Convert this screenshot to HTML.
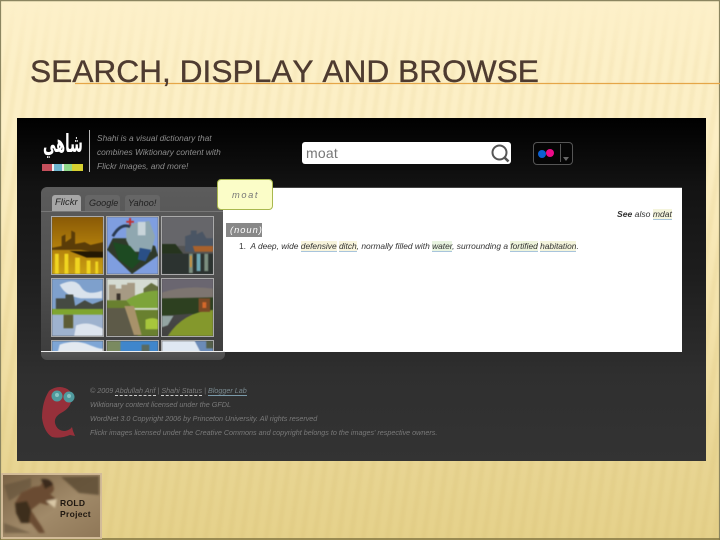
<!DOCTYPE html>
<html><head><meta charset="utf-8"><style>
html,body{margin:0;padding:0;width:720px;height:540px;overflow:hidden}
body{position:relative;background:#fdf0c8;font-family:"Liberation Sans",sans-serif}
#w{position:absolute;left:0;top:0;width:720px;height:540px;filter:blur(.3px)}
.a{position:absolute}
.t{position:absolute;white-space:nowrap;font-style:italic}
.th{position:absolute;overflow:hidden;box-sizing:border-box;border:1px solid #aaa}
.th svg{display:block;width:100%;height:100%;filter:blur(.6px)}
</style></head><body><div id="w">
<svg class="a" style="left:0;top:0" width="720" height="540" viewBox="0 0 720 540">
<defs>
<linearGradient id="bg" x1="0" y1="0" x2="0" y2="1"><stop offset="0" stop-color="#fdf0c9"/><stop offset=".25" stop-color="#fcefc5"/><stop offset=".6" stop-color="#f3e2aa"/><stop offset=".85" stop-color="#e8d593"/><stop offset="1" stop-color="#e5d18a"/></linearGradient>
<pattern id="st" width="12" height="22" patternUnits="userSpaceOnUse" patternTransform="rotate(8)"><rect width="5" height="22" fill="#d8bf76"/></pattern>
<linearGradient id="fadeB" x1="0" y1="0" x2="0" y2="1"><stop offset="0" stop-color="#000"/><stop offset=".12" stop-color="#555"/><stop offset="1" stop-color="#aaa"/></linearGradient>
<mask id="mL" maskUnits="userSpaceOnUse" x="0" y="0" width="720" height="540"><rect width="720" height="540" fill="url(#fadeB)"/></mask>
<filter id="bl"><feGaussianBlur stdDeviation="1.1"/></filter>
</defs>
<rect width="720" height="540" fill="url(#bg)"/>
<g mask="url(#mL)" opacity=".32"><rect x="-20" y="-20" width="760" height="580" fill="url(#st)" filter="url(#bl)"/></g>
<path d="M0 .5H720" stroke="#8b8560" stroke-width="1.4"/>
<path d="M.5 0V540M719.5 0V540" stroke="#8b8560" stroke-width="1.2"/>
<path d="M0 539H720" stroke="#7f7340" stroke-width="1.6"/>
<path d="M75 83.5H720" stroke="#e5a648" stroke-width="1.2"/>
</svg>
<div class="a" style="left:30px;top:51px;font-size:31.7px;line-height:40px;color:#4e3b30;white-space:nowrap;font-kerning:none;-webkit-text-stroke:.35px #4e3b30">SEARCH, DISPLAY AND BROWSE</div>

<div class="a" style="left:17px;top:118px;width:689px;height:343px;background:linear-gradient(#000 0,#131313 20%,#1d1d1d 45%,#2f2f2f 75%,#333 100%)"></div>

<!-- logo -->
<div class="t" style="left:43px;top:128px;font:bold 25px/32px 'DejaVu Sans',sans-serif;color:#fff;transform:scaleX(.52);transform-origin:0 0">شاهي</div>
<div class="a" style="left:42px;top:164px;width:10px;height:7px;background:#c44f5b"></div>
<div class="a" style="left:52px;top:164px;width:2px;height:7px;background:#eee"></div>
<div class="a" style="left:54px;top:164px;width:8px;height:7px;background:#6db5cf"></div>
<div class="a" style="left:62px;top:164px;width:2px;height:7px;background:#eee"></div>
<div class="a" style="left:64px;top:164px;width:8px;height:7px;background:#8fd88a"></div>
<div class="a" style="left:72px;top:164px;width:11px;height:7px;background:#d6d030"></div>
<div class="a" style="left:89px;top:130px;width:1px;height:42px;background:#bbb"></div>
<div class="t" style="left:97px;top:131px;font-size:8.35px;line-height:14px;color:#8d8d8d">Shahi is a visual dictionary that<br>combines Wiktionary content with<br>Flickr images, and more!</div>

<!-- search -->
<div class="a" style="left:302px;top:142px;width:209px;height:22px;background:#fff;border-radius:3px"></div>
<div class="a" style="left:306px;top:145px;font-size:14px;line-height:17px;color:#777;letter-spacing:.2px">moat</div>
<svg class="a" style="left:488px;top:142px" width="24" height="22"><circle cx="11.5" cy="10.5" r="7" fill="none" stroke="#555" stroke-width="2"/><path d="M16.5 15.5L20.5 19.5" stroke="#555" stroke-width="2.6"/></svg>

<!-- flickr -->
<div class="a" style="left:533px;top:142px;width:38px;height:21px;border:1px solid #555;border-radius:4px;background:#050505"></div>
<div class="a" style="left:538px;top:150px;width:8px;height:8px;border-radius:50%;background:#0b5fd0"></div>
<div class="a" style="left:546px;top:149px;width:8px;height:8px;border-radius:50%;background:#ed0a88"></div>
<div class="a" style="left:560px;top:144px;width:1px;height:18px;background:#555"></div>
<div class="a" style="left:563px;top:157px;width:0;height:0;border-left:3.5px solid transparent;border-right:3.5px solid transparent;border-top:4px solid #666"></div>

<!-- left panel -->
<div class="a" style="left:41px;top:187px;width:184px;height:173px;border-radius:6px;background:linear-gradient(#5c5c5c 0,#505050 50%,#3e3e3e 95%,#555 95%,#4a4a4a 100%)"></div>
<div class="a" style="left:41px;top:211px;width:182px;height:1px;background:#777"></div>
<div class="a" style="left:52px;top:195px;width:29px;height:16px;background:#a6a6a6;border-radius:3px 3px 0 0"></div>
<div class="a" style="left:85px;top:195px;width:35px;height:16px;background:#666;border-radius:3px 3px 0 0"></div>
<div class="a" style="left:125px;top:195px;width:35px;height:16px;background:#666;border-radius:3px 3px 0 0"></div>
<div class="t" style="left:55px;top:197px;font-size:9.5px;line-height:12px;color:#222">Flickr</div>
<div class="t" style="left:89px;top:197px;font-size:9.1px;line-height:12px;color:#222">Google</div>
<div class="t" style="left:128px;top:197px;font-size:9.2px;line-height:12px;color:#222">Yahoo!</div>

<!-- white content -->
<div class="a" style="left:223px;top:187px;width:459px;height:165px;background:#fff;border-top:1px solid #444;box-sizing:border-box"></div>

<!-- thumbs -->
<div class="th" style="left:51px;top:216px;width:53px;height:59px"><svg viewBox="0 0 53 59" preserveAspectRatio="none"><defs><linearGradient id="g1" x1="0" y1="0" x2="0" y2="1"><stop offset="0" stop-color="#8a5a06"/><stop offset=".5" stop-color="#b07d0c"/><stop offset="1" stop-color="#c9a012"/></linearGradient></defs><rect width="53" height="59" fill="url(#g1)"/><path d="M0 32L10 30V20L14 18V26L20 22V14L24 16V28L34 26L40 29L53 26V38L30 34H0Z" fill="#5a3c08"/><path d="M18 35L53 36V42L36 42Z" fill="#241803"/><path d="M3 38h4v21h-4zM13 38h4v21h-4zM24 42h5v17h-5zM36 45h4v14h-4zM45 46h3v13h-3z" fill="#f0d520"/></svg></div>
<div class="th" style="left:106px;top:216px;width:53px;height:59px"><svg viewBox="0 0 53 59" preserveAspectRatio="none"><rect width="53" height="59" fill="#7f9ee0"/><path d="M0 34L26 59L53 40L50 30L26 22L6 22Z" fill="#2f3a2a"/><path d="M20 8L44 4L50 20L46 36L26 36L20 24Z" fill="#8fa7b0"/><path d="M32 5h8v14h-8z" fill="#c8d4da"/><path d="M6 26L24 30L36 44L26 54L12 44Z" fill="#1d4a22"/><path d="M34 32L46 34L40 46L32 44Z" fill="#2a4f86"/><path d="M20 4h8v2h-8zM23 1h2v8h-2z" fill="#c03030"/><path d="M6 20Q14 6 24 10" stroke="#2a3a50" stroke-width="3" fill="none"/></svg></div>
<div class="th" style="left:161px;top:216px;width:53px;height:59px"><svg viewBox="0 0 53 59" preserveAspectRatio="none"><rect width="53" height="30" fill="#66666a"/><path d="M24 30V20L30 18V14L36 14V18L42 15L46 22L53 22V36H24Z" fill="#4a5564"/><path d="M0 28L14 28L22 38H0Z" fill="#26341e"/><path d="M32 30L53 30V36H34Z" fill="#a8612c"/><rect y="38" width="53" height="21" fill="#2c3330"/><path d="M28 38h4v20h-4zM44 38h4v18h-4z" fill="#7c8f80"/><path d="M36 38h4v18h-4z" fill="#6fa9b5"/><path d="M29 40h2v12h-2z" fill="#c9913e"/></svg></div>
<div class="th" style="left:51px;top:278px;width:53px;height:59px"><svg viewBox="0 0 53 59" preserveAspectRatio="none"><rect width="53" height="59" fill="#7ea0cc"/><path d="M8 6Q24 -2 30 8T52 12V20H30Q14 18 8 6Z" fill="#d9e2ec"/><path d="M4 20h10V16h8l2 12 10-6 8 4 11-4v14H4Z" fill="#454a42"/><rect y="31" width="53" height="6" fill="#7fa52f"/><rect y="37" width="53" height="22" fill="#9eb2ce"/><path d="M12 37h10v14h-10z" fill="#5d5c34"/><path d="M25 48q10-4 20 0t8 4v7h-30Z" fill="#dde4ee"/></svg></div>
<div class="th" style="left:106px;top:278px;width:53px;height:59px"><svg viewBox="0 0 53 59" preserveAspectRatio="none"><rect width="53" height="59" fill="#d5dbd2"/><path d="M2 6h7v4h6V6h6V4h8v18L2 22Z" fill="#a69a84"/><path d="M10 15h4v7h-4z" fill="#39312a"/><path d="M38 10l8-6 7 4v14H38Z" fill="#66703f"/><path d="M20 22Q36 12 53 12V30H26Z" fill="#7da43a"/><path d="M0 22h20l8 10 25 0v27H0Z" fill="#69802f"/><path d="M0 30h24l8 29H0Z" fill="#5d5a48"/><path d="M18 28L28 28L36 58L28 58Z" fill="#a8926a"/><path d="M40 42q8-3 13 0v10h-13Z" fill="#a7c63c"/></svg></div>
<div class="th" style="left:161px;top:278px;width:53px;height:59px"><svg viewBox="0 0 53 59" preserveAspectRatio="none"><rect width="53" height="22" fill="#7d7570"/><path d="M0 0h53v10Q26 6 0 14Z" fill="#6a6670"/><path d="M0 20L53 19V40L30 36L0 38Z" fill="#2d4020"/><path d="M0 38H12L6 48L0 50Z" fill="#93a4a2"/><path d="M6 59Q22 34 53 32V59Z" fill="#84982c"/><path d="M38 20h12v14h-12z" fill="#7a4a26"/><rect x="42" y="24" width="4" height="6" fill="#d6682a"/></svg></div>
<div class="th" style="left:51px;top:340px;width:53px;height:12px;border-bottom:0"><svg viewBox="0 0 53 12" preserveAspectRatio="none"><rect width="53" height="12" fill="#7ea6d6"/><path d="M8 4q16-6 30 0t15 4v4H6Z" fill="#e3e9f0"/></svg></div>
<div class="th" style="left:106px;top:340px;width:53px;height:12px;border-bottom:0"><svg viewBox="0 0 53 12" preserveAspectRatio="none"><rect width="53" height="12" fill="#3f86cc"/><path d="M0 0h14v12H0Z" fill="#7a8a60"/><path d="M36 4h8v8h-8z" fill="#5a6a60"/></svg></div>
<div class="th" style="left:161px;top:340px;width:53px;height:12px;border-bottom:0"><svg viewBox="0 0 53 12" preserveAspectRatio="none"><rect width="53" height="12" fill="#dfe8f2"/><path d="M34 0h19v12H40Z" fill="#6b8bb8"/><path d="M46 0h7v8h-7z" fill="#55604a"/></svg></div>
<div class="a" style="left:41px;top:351px;width:184px;height:1px;background:#eee"></div>

<!-- word tab -->
<div class="a" style="left:217px;top:179px;width:56px;height:31px;box-sizing:border-box;background:#fbfdc8;border:1px solid #a9b84e;border-radius:4px"></div>
<div class="t" style="left:232px;top:189px;font-size:9.3px;line-height:12px;color:#777;letter-spacing:1.6px">moat</div>

<!-- definition -->
<div class="a" style="left:226px;top:223px;width:36px;height:14px;background:#888"></div>
<div class="t" style="left:230px;top:224px;font-size:9.3px;line-height:12px;color:#fff;letter-spacing:1px">(noun)</div>
<div class="t" style="left:239px;top:240px;font-size:8.4px;line-height:12px;color:#333"><span style="font-style:normal">1.</span>&nbsp; A deep, wide <span style="background:#f8f4dc;border-bottom:1px solid #a8c4dc">defensive</span> <span style="background:#f8f4dc;border-bottom:1px solid #a8c4dc">ditch</span>, normally filled with <span style="background:#e8f4e0;border-bottom:1px solid #a8c4dc">water</span>, surrounding a <span style="background:#eef4dc;border-bottom:1px solid #a8c4dc">fortified</span> <span style="background:#f4f4dc;border-bottom:1px solid #a8c4dc">habitation</span>.</div>
<div class="t" style="left:617px;top:208px;font-size:8.6px;line-height:12px;color:#333"><b>See</b> also <span style="background:#f4f4dc;border-bottom:1px solid #a8c4dc">mdat</span></div>

<!-- mascot -->
<svg class="a" style="left:0;top:370px" width="90" height="80" viewBox="0 370 90 80">
<path d="M60 387Q72 388 72 398Q71 408 61 413Q54 417 55 423Q57 431 65 431Q70 430 72 427L73 431L75 436L70 435Q60 439 52 437Q44 432 42 418Q42 402 49 391Q54 387 60 387Z" fill="#96303a"/>
<circle cx="57" cy="396" r="5.5" fill="#4f9a9e"/><circle cx="69" cy="397" r="5.5" fill="#4f9a9e"/><circle cx="57" cy="395" r="2" fill="#8ac4c4"/><circle cx="69" cy="396" r="2" fill="#8ac4c4"/>
</svg>

<!-- footer -->
<div class="t" style="left:90px;top:384px;font-size:7.2px;line-height:14px;color:#7a7a7a">© 2009 <span style="border-bottom:1px dashed #ccc">Abdullah Arif</span> | <span style="border-bottom:1px dashed #ccc">Shahi Status</span> | <span style="border-bottom:1px solid #7a9aaa;color:#7a8a90">Blogger Lab</span><br>Wiktionary content licensed under the GFDL<br>WordNet 3.0 Copyright 2006 by Princeton University. All rights reserved<br>Flickr images licensed under the Creative Commons and copyright belongs to the images' respective owners.</div>

<!-- ROLD image -->
<svg class="a" style="left:1px;top:473px" width="101" height="66" viewBox="0 0 101 66">
<defs><linearGradient id="r1" x1="0" y1="0" x2="1" y2="1"><stop offset="0" stop-color="#7a6346"/><stop offset=".55" stop-color="#a18a69"/><stop offset="1" stop-color="#8f7757"/></linearGradient><filter id="b2"><feGaussianBlur stdDeviation="1"/></filter></defs>
<rect width="101" height="66" fill="#d2bb98"/><rect x="2" y="2" width="97" height="62" fill="url(#r1)"/>
<g filter="url(#b2)">
<path d="M60 4L98 3V22L78 20Z" fill="#54432e" opacity=".75"/><path d="M3 12L30 5V14L8 28Z" fill="#5f4e38" opacity=".6"/><path d="M3 50L30 60H3Z" fill="#5f4e38" opacity=".6"/>
<path d="M44 6Q52 7 53 16Q52 20 49 21L55 26L56 29L46 32L39 30L30 37L35 45L41 54L44 60H38L30 50L20 50L16 38L14 30L20 20L32 14L39 13Z" fill="#6b4c30"/>
<path d="M40 6Q50 5 52 12L44 16Z" fill="#3a2a1a"/><path d="M14 30L26 28L30 37L28 50L20 50L15 40Z" fill="#3e2d1e"/>
<path d="M45 28L56 26L54 35Z" fill="#d9c7a6"/>
</g></svg>
<div class="a" style="left:60px;top:498px;font:bold 8.5px/11px 'Liberation Sans',sans-serif;color:#1e1710;letter-spacing:.3px">ROLD<br>Project</div>
</div></body></html>
